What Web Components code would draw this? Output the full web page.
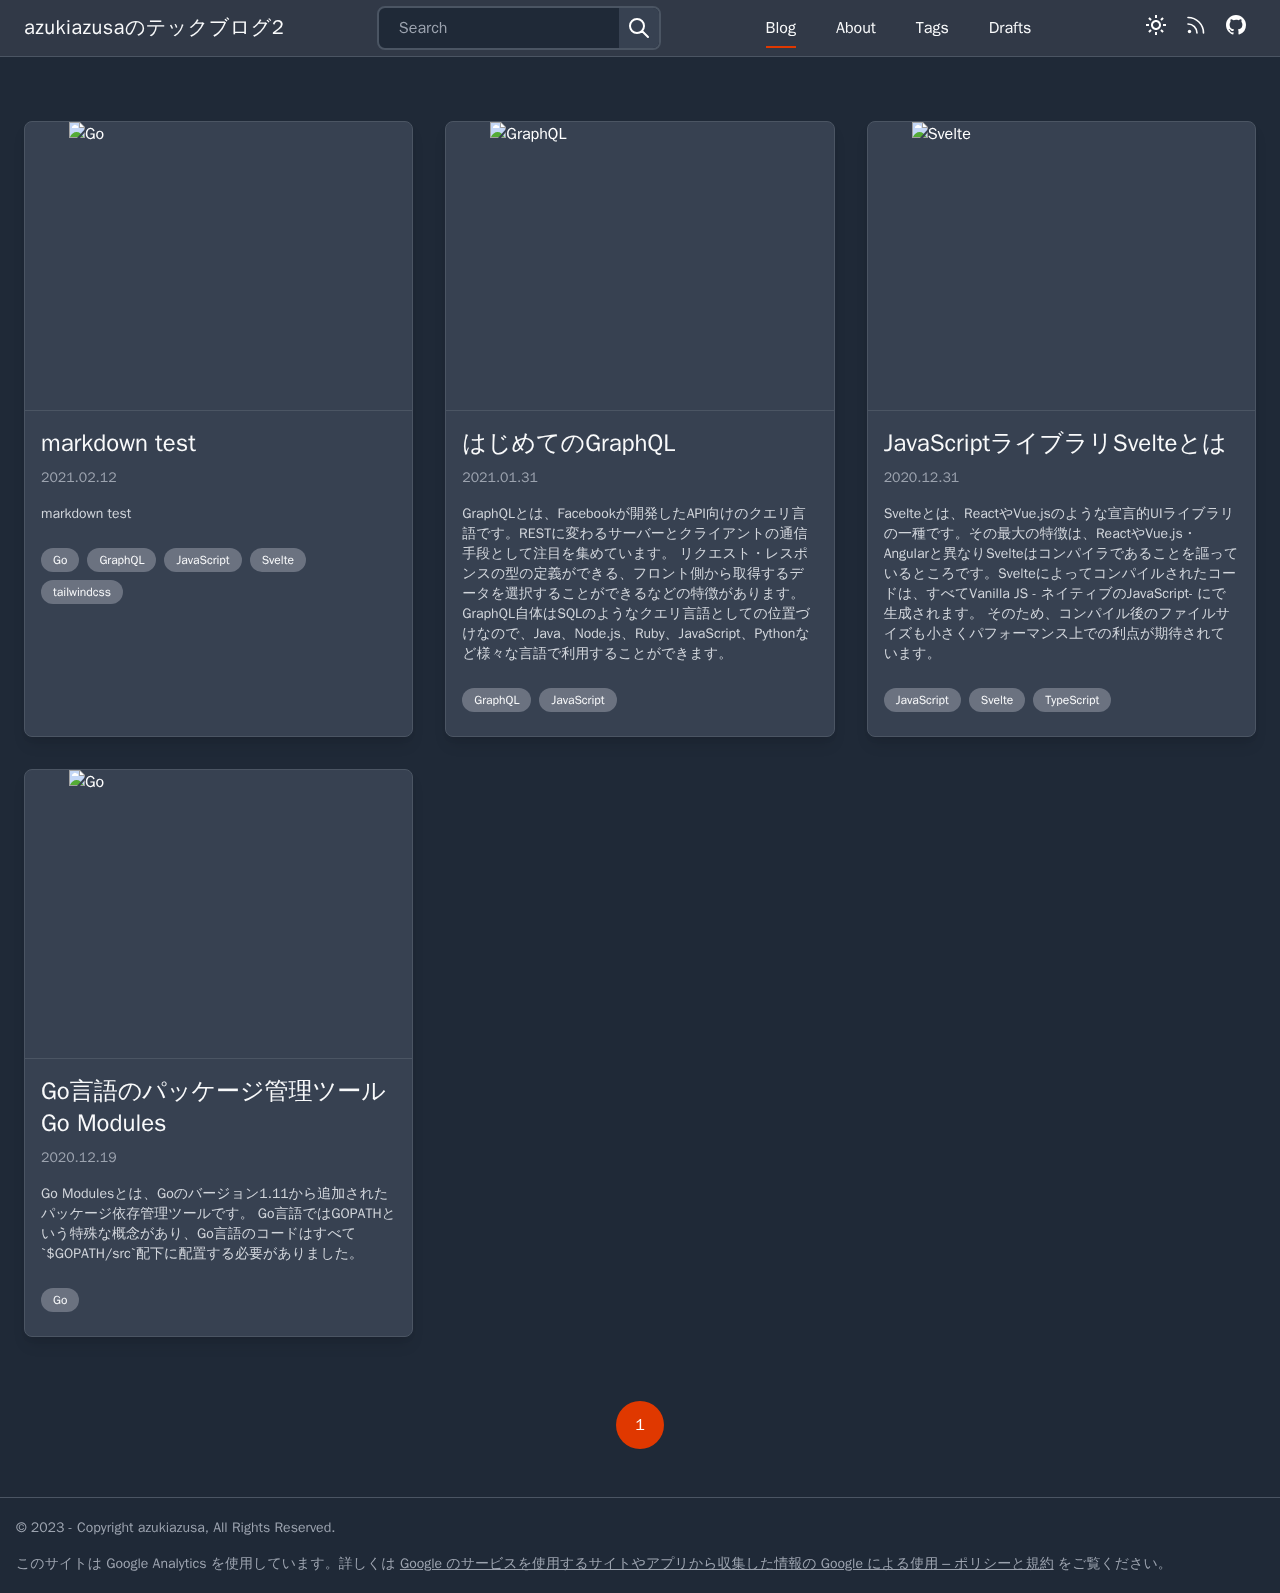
<!DOCTYPE html>
<html lang="ja">
<head>
<meta charset="utf-8">
<meta name="viewport" content="width=device-width, initial-scale=1">
<title>azukiazusaのテックブログ2</title>
<style>
  :root {
    --page: #1f2937;
    --card: #374151;
    --line: #4b5563;
    --chip: #6b7280;
    --muted: #9ca3af;
    --soft: #d1d5db;
    --text: #f9fafb;
    --accent: #e03800;
  }
  body {
    margin: 0;
    background: var(--page);
    color: var(--text);
    font: 16px/24px "WenQuanYi Zen Hei", "Liberation Sans", "Noto Sans CJK JP", sans-serif;
  }
</style>
</head>
<body>
<blog-app></blog-app>

<script>
const define = (name, html, setup) => {
  const template = document.createElement('template');
  template.innerHTML = html;
  customElements.define(name, class extends HTMLElement {
    connectedCallback() {
      if (this.shadowRoot) return;
      this.attachShadow({ mode: 'open' }).append(template.content.cloneNode(true));
      if (setup) setup(this, this.shadowRoot);
    }
  });
};

define('search-box', `
  <style>
    :host { display: block; }
    form { display: flex; box-sizing: border-box; height: 44px; border: 2px solid var(--line); border-radius: 8px; overflow: hidden; background: var(--page); }
    input { box-sizing: border-box; width: 240px; min-width: 0; border: 0; outline: 0; margin: 0; padding: 0 20px; background: transparent; color: var(--text); font: inherit; }
    input::placeholder { color: var(--muted); opacity: 1; }
    button { display: grid; place-items: center; width: 40px; border: 0; padding: 0; background: var(--card); color: #fff; cursor: pointer; }
    svg { width: 24px; height: 24px; }
  </style>
  <form role="search">
    <input type="text" placeholder="Search" aria-label="Search">
    <button type="button" aria-label="検索">
      <svg viewBox="0 0 24 24" fill="none" stroke="currentColor" stroke-width="2" stroke-linecap="round" stroke-linejoin="round"><path d="M21 21l-6-6m2-5a7 7 0 11-14 0 7 7 0 0114 0z"/></svg>
    </button>
  </form>`);

define('nav-link', `
  <style>
    :host { display: block; }
    a { display: block; padding: 8px 0 6px; border-bottom: 2px solid transparent; color: var(--text); text-decoration: none; }
    :host([active]) a { border-color: var(--accent); }
  </style>
  <a href="#"><slot></slot></a>`);

define('icon-link', `
  <style>
    :host { display: block; }
    a { display: block; padding: 8px; color: #fff; }
    ::slotted(svg) { display: block; width: 24px; height: 24px; }
  </style>
  <a href="#"><slot></slot></a>`, (host, root) => {
    root.querySelector('a').setAttribute('aria-label', host.getAttribute('label'));
  });

define('site-header', `
  <style>
    :host { display: block; border-bottom: 1px solid var(--line); background: #313947; }
    header { display: flex; align-items: center; justify-content: space-between; box-sizing: border-box; height: 56px; padding: 0 24px; }
    .title { margin-right: -12px; color: var(--text); font-size: 20px; line-height: 28px; letter-spacing: 0.5px; text-decoration: none; white-space: nowrap; }
    nav { display: flex; gap: 40px; }
    .icons { display: flex; align-self: flex-start; padding-top: 5px; }
  </style>
  <header>
    <a class="title" href="#">azukiazusaのテックブログ2</a>
    <search-box></search-box>
    <nav>
      <nav-link active>Blog</nav-link>
      <nav-link>About</nav-link>
      <nav-link>Tags</nav-link>
      <nav-link>Drafts</nav-link>
    </nav>
    <div class="icons">
      <icon-link label="テーマ切替"><svg viewBox="0 0 24 24" fill="currentColor"><path d="M6.993 12c0 2.761 2.246 5.007 5.007 5.007s5.007-2.246 5.007-5.007S14.761 6.993 12 6.993 6.993 9.239 6.993 12zM12 8.993c1.658 0 3.007 1.349 3.007 3.007S13.658 15.007 12 15.007 8.993 13.658 8.993 12 10.342 8.993 12 8.993zM10.998 19h2v3h-2zm0-17h2v3h-2zm-9 9h3v2h-3zm17 0h3v2h-3zM4.219 18.363l2.12-2.122 1.415 1.414-2.12 2.122zM16.24 6.344l2.122-2.122 1.414 1.414-2.122 2.122zM6.342 7.759 4.22 5.637l1.415-1.414 2.12 2.122zm13.434 10.605-1.414 1.414-2.122-2.122 1.414-1.414z"/></svg></icon-link>
      <icon-link label="RSS"><svg viewBox="0 0 24 24" fill="none" stroke="currentColor" stroke-width="1.6" stroke-linecap="round"><path d="M4 4.5A15.5 15.5 0 0 1 19.5 20M4 11a9 9 0 0 1 9 9"/><circle cx="5.5" cy="18.5" r="1.7" fill="currentColor" stroke="none"/></svg></icon-link>
      <icon-link label="GitHub"><svg viewBox="0 0 24 24" fill="currentColor"><path fill-rule="evenodd" d="M12 2C6.477 2 2 6.484 2 12.017c0 4.425 2.865 8.180 6.839 9.504.5.092.682-.217.682-.483 0-.237-.008-.868-.013-1.703-2.782.605-3.369-1.343-3.369-1.343-.454-1.158-1.110-1.466-1.110-1.466-.908-.620.069-.608.069-.608 1.003.070 1.531 1.032 1.531 1.032.892 1.530 2.341 1.088 2.910.832.092-.647.350-1.088.636-1.338-2.220-.253-4.555-1.113-4.555-4.951 0-1.093.390-1.988 1.029-2.688-.103-.253-.446-1.272.098-2.650 0 0 .840-.270 2.750 1.026A9.564 9.564 0 0112 6.844c.850.004 1.705.115 2.504.337 1.909-1.296 2.747-1.027 2.747-1.027.546 1.379.202 2.398.100 2.651.640.700 1.028 1.595 1.028 2.688 0 3.848-2.339 4.695-4.566 4.943.359.309.678.920.678 1.855 0 1.338-.012 2.419-.012 2.747 0 .268.180.580.688.482A10.019 10.019 0 0022 12.017C22 6.484 17.522 2 12 2z"/></svg></icon-link>
    </div>
  </header>`);

define('tag-chip', `
  <style>
    :host { display: block; }
    a { display: block; padding: 4px 12px; border-radius: 12px; background: var(--chip); color: var(--text); font-size: 12px; line-height: 16px; text-decoration: none; }
  </style>
  <a href="#"><slot></slot></a>`);

define('article-card', `
  <style>
    :host { display: block; box-sizing: border-box; border: 1px solid var(--line); border-radius: 8px; overflow: hidden; background: var(--card); box-shadow: 0 10px 15px -3px rgba(0,0,0,.1), 0 4px 6px -2px rgba(0,0,0,.05); }
    .thumb { display: flex; height: 288px; padding: 0 44px; border-bottom: 1px solid var(--line); color: #fff; }
    .thumb svg { width: 16px; height: 16px; }
    .body { padding: 16px 16px 24px; }
    h2 { margin: 0 0 9px; font-size: 24px; line-height: 32px; font-weight: 400; }
    h2 a { color: var(--text); text-decoration: none; }
    time { display: block; margin-bottom: 16px; color: var(--muted); font-size: 14px; line-height: 20px; }
    p { margin: 0 0 24px; color: var(--soft); font-size: 14px; line-height: 20px; }
    .tags { display: flex; flex-wrap: wrap; gap: 8px; padding-right: 64px; }
  </style>
  <article>
    <div class="thumb">
      <svg viewBox="0 0 16 16" aria-hidden="true">
        <path d="M0 0h11l5 5v11H0z" fill="#a0a0a0"/><path d="M1 1h9v5h5v9H1z" fill="#c4d7f6"/>
        <path d="M11 1l4 4h-4z" fill="#fff"/>
        <path d="M3 6a1.5 1.5 0 0 1 1-2 2 2 0 0 1 3.5-.4A1.5 1.5 0 0 1 9 6z" fill="#fff"/>
        <path d="M1 15c1-3 4-5 6.5-5 3 0 5 2 7 5z" fill="#54ab36"/>
        <path d="M16 7v3l-5 6H8z" fill="#374151"/>
      </svg>
      <span class="alt"></span>
    </div>
    <div class="body">
      <h2><a href="#"><slot name="title"></slot></a></h2>
      <time></time>
      <p><slot></slot></p>
      <div class="tags"></div>
    </div>
  </article>`, (host, root) => {
    root.querySelector('.alt').textContent = host.getAttribute('category');
    root.querySelector('time').textContent = host.getAttribute('date');
    for (const tag of host.getAttribute('tags').split(',')) {
      const chip = document.createElement('tag-chip');
      chip.textContent = tag;
      root.querySelector('.tags').append(chip);
    }
  });

define('page-nav', `
  <style>
    :host { display: block; padding: 64px 0 48px; }
    nav { display: flex; justify-content: center; }
    a { display: grid; place-items: center; width: 48px; height: 48px; border-radius: 50%; background: var(--accent); color: #fff; text-decoration: none; }
  </style>
  <nav aria-label="ページ"><a href="#" aria-current="page">1</a></nav>`);

define('site-footer', `
  <style>
    :host { display: block; border-top: 1px solid var(--line); color: var(--muted); font-size: 14px; line-height: 20px; }
    footer { display: flex; flex-direction: column; gap: 16px; padding: 20px 16px; }
    p { margin: 0; }
    a { color: inherit; }
  </style>
  <footer>
    <p>© 2023 - Copyright azukiazusa, All Rights Reserved.</p>
    <p>このサイトは Google Analytics を使用しています。詳しくは <a href="#">Google のサービスを使用するサイトやアプリから収集した情報の Google による使用 – ポリシーと規約</a> をご覧ください。</p>
  </footer>`);

define('blog-app', `
  <style>
    :host { display: block; }
    main { display: grid; grid-template-columns: repeat(auto-fill, minmax(320px, 1fr)); gap: 32px; padding: 64px 24px 0; }
  </style>
  <site-header></site-header>
  <main>
    <article-card category="Go" date="2021.02.12" tags="Go,GraphQL,JavaScript,Svelte,tailwindcss"><span slot="title">markdown test</span>markdown test</article-card>
    <article-card category="GraphQL" date="2021.01.31" tags="GraphQL,JavaScript"><span slot="title">はじめてのGraphQL</span>GraphQLとは、Facebookが開発したAPI向けのクエリ言語です。RESTに変わるサーバーとクライアントの通信手段として注目を集めています。 リクエスト・レスポンスの型の定義ができる、フロント側から取得するデータを選択することができるなどの特徴があります。 GraphQL自体はSQLのようなクエリ言語としての位置づけなので、Java、Node.js、Ruby、JavaScript、Pythonなど様々な言語で利用することができます。</article-card>
    <article-card category="Svelte" date="2020.12.31" tags="JavaScript,Svelte,TypeScript"><span slot="title">JavaScriptライブラリSvelteとは</span>Svelteとは、ReactやVue.jsのような宣言的UIライブラリの一種です。その最大の特徴は、ReactやVue.js・Angularと異なりSvelteはコンパイラであることを謳っているところです。Svelteによってコンパイルされたコードは、すべてVanilla JS - ネイティブのJavaScript- にで生成されます。 そのため、コンパイル後のファイルサイズも小さくパフォーマンス上での利点が期待されています。</article-card>
    <article-card category="Go" date="2020.12.19" tags="Go"><span slot="title">Go言語のパッケージ管理ツール Go Modules</span>Go Modulesとは、Goのバージョン1.11から追加されたパッケージ依存管理ツールです。 Go言語ではGOPATHという特殊な概念があり、Go言語のコードはすべて\`$GOPATH/src\`配下に配置する必要がありました。</article-card>
  </main>
  <page-nav></page-nav>
  <site-footer></site-footer>`);
</script>
</body>
</html>
